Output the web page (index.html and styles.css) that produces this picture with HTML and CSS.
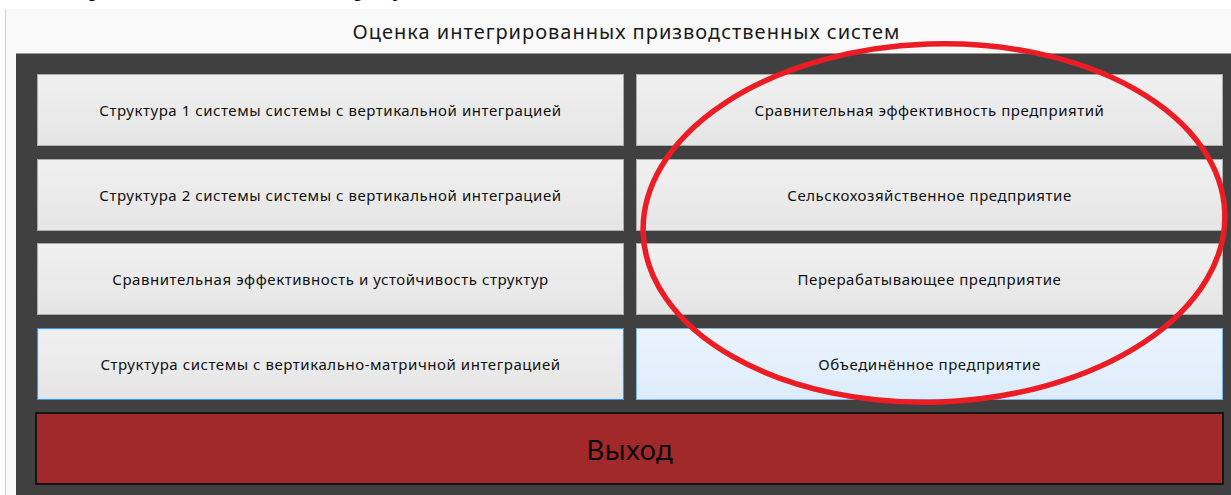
FILE: index.html
```html
<!DOCTYPE html>
<html lang="ru">
<head>
<meta charset="utf-8">
<title>Оценка интегрированных призводственных систем</title>
<link rel="stylesheet" href="styles.css">
</head>
<body>
<div class="page">
  <div class="doc-line"><p>Окно приложения показано на рисунке</p></div>
  <div class="window">
    <div class="title">Оценка интегрированных призводственных систем</div>
    <div class="panel">
      <div class="grid">
        <button class="btn">Структура 1 системы системы с вертикальной интеграцией</button>
        <button class="btn">Сравнительная эффективность предприятий</button>
        <button class="btn">Структура 2 системы системы с вертикальной интеграцией</button>
        <button class="btn">Сельскохозяйственное предприятие</button>
        <button class="btn">Сравнительная эффективность и устойчивость структур</button>
        <button class="btn">Перерабатывающее предприятие</button>
        <button class="btn btn-focus">Структура системы с вертикально-матричной интеграцией</button>
        <button class="btn btn-hover">Объединённое предприятие</button>
      </div>
      <button class="exit">Выход</button>
    </div>
  </div>
  <svg class="mark" width="1231" height="495" viewBox="0 0 1231 495">
    <ellipse cx="934" cy="223" rx="291" ry="179" transform="rotate(-2 934 223)" fill="none" stroke="#ec1c24" stroke-width="5.5"/>
  </svg>
</div>
</body>
</html>
```

FILE: styles.css
```css
html, body {
  margin: 0;
  padding: 0;
  background: #ffffff;
}

.page {
  position: relative;
  width: 1231px;
  height: 495px;
  overflow: hidden;
}

/* line of the surrounding document, mostly scrolled out of view */
.doc-line {
  height: 9px;
  overflow: hidden;
}

.doc-line p {
  margin: -25px 0 0 10px;
  font-family: "Liberation Serif", serif;
  font-size: 26px;
  line-height: 26px;
  color: #000;
}

.window {
  margin-left: 5px;
  height: 486px;
  background: #f9f9f9;
  border-left: 1px solid #cfcfcf;
  display: flex;
  flex-direction: column;
}

.title {
  height: 44px;
  display: flex;
  align-items: center;
  justify-content: center;
  font-family: "Noto Sans", sans-serif;
  font-size: 20px;
  letter-spacing: 1px;
  color: #1a1a1a;
  padding-left: 16px;
  box-sizing: border-box;
}

.panel {
  margin-left: 10px;
  flex: 1;
  background: #404040;
  border-top: 1px solid #9a9a9a;
  padding: 20px 0 0 21px;
  display: flex;
  flex-direction: column;
}

.grid {
  width: 1186px;
  display: grid;
  grid-template-columns: 587px 587px;
  grid-template-rows: repeat(4, 72px);
  column-gap: 12px;
  row-gap: 12.5px;
}

.btn {
  margin: 0;
  padding: 0;
  border: 1px solid #acacac;
  background: linear-gradient(#f0f0f0, #e5e5e5);
  font-family: "Noto Sans", sans-serif;
  font-size: 15px;
  letter-spacing: 0.55px;
  color: #111;
  cursor: default;
}

.btn-focus {
  border-color: #3c97f0;
  box-shadow: inset 0 0 0 1px #cfe5fb;
}

.btn-hover {
  border-color: #7eb4ea;
  background: linear-gradient(#ecf4fc, #dcecfc);
}

.exit {
  margin: 12.5px 0 0 -2px;
  width: 1189px;
  height: 73px;
  padding: 0;
  border: 2px solid #151515;
  background: #a1292a;
  font-family: "Noto Sans", sans-serif;
  font-size: 28px;
  color: #0a0a0a;
  cursor: default;
}

/* hand-drawn highlight over the right column */
.mark {
  position: absolute;
  left: 0;
  top: 0;
  pointer-events: none;
}
```
